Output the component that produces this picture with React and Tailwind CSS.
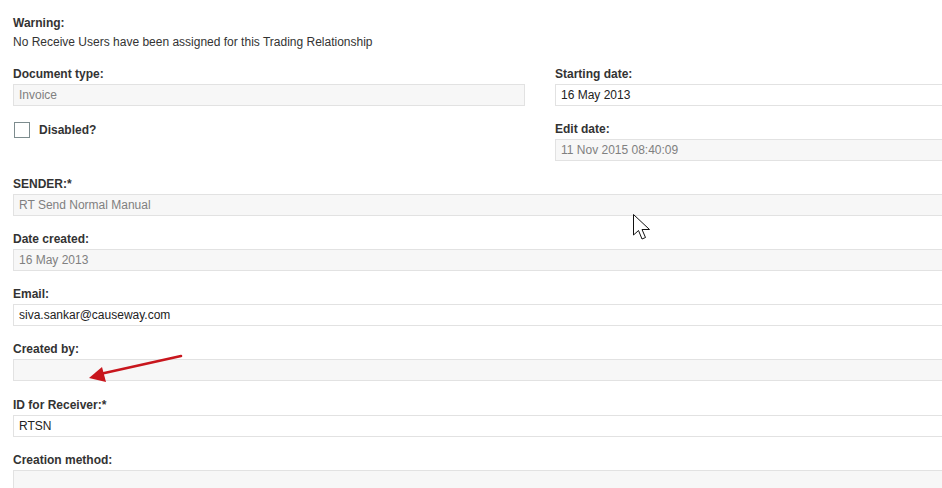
import React from "react";

const font = { fontFamily: '"Liberation Sans", Arial, sans-serif' };

// Label + input block used throughout the form
const Field = ({ label, value, disabled, extra }) => (
  <div className={extra ? "mb-[15px]" : "mb-[14px]"}>
    <div className="h-[17px] leading-[18px] mb-[2px] text-[12px] font-bold text-[#333]">{label}</div>
    <div
      className={
        "h-[22px] border border-[#e2e2e2] px-[5px] text-[12px] leading-[20px] " +
        (disabled ? "bg-[#f7f7f7] text-[#808080]" : "bg-white text-[#222]")
      }
    >
      {value}
    </div>
  </div>
);

export default function App() {
  return (
    <div className="relative w-full h-[488px] overflow-hidden bg-white" style={font}>
      <div className="w-[1100px] pl-[13px] pt-[14px]">
        {/* warning */}
        <div className="text-[12px] leading-[19px] text-[#333] mb-[13px]">
          <div className="font-bold">Warning:</div>
          <div>No Receive Users have been assigned for this Trading Relationship</div>
        </div>

        {/* two columns */}
        <div className="grid grid-cols-[512px_1fr] gap-x-[30px]">
          <div>
            <Field label="Document type:" value="Invoice" disabled />
            <div className="flex items-center mt-[3px]">
              <span className="w-[16px] h-[16px] border border-[#7d8c8e] bg-white ml-[1px]" />
              <span className="ml-[9px] text-[12px] font-bold text-[#333] pt-[1px]">Disabled?</span>
            </div>
          </div>
          <div>
            <Field label="Starting date:" value="16 May 2013" />
            <Field label="Edit date:" value="11 Nov 2015 08:40:09" disabled />
          </div>
        </div>

        {/* full width rows */}
        <Field label="SENDER:*" value="RT Send Normal Manual" disabled />
        <Field label="Date created:" value="16 May 2013" disabled />
        <Field label="Email:" value="siva.sankar@causeway.com" />
        <Field label="Created by:" value="" disabled extra />
        <Field label="ID for Receiver:*" value="RTSN" />
        <Field label="Creation method:" value="" disabled />
      </div>

      {/* red annotation arrow */}
      <svg className="absolute left-0 top-0 pointer-events-none" width="942" height="488">
        <line x1="181" y1="356" x2="100" y2="374" stroke="#c8161d" strokeWidth="2.6" strokeLinecap="round" />
        <polygon points="89,378 102,367 106,382" fill="#c8161d" />
      </svg>

      {/* mouse pointer */}
      <svg className="absolute left-[633px] top-[214px] pointer-events-none" width="20" height="28" viewBox="0 0 20 28">
        <path
          d="M0.5 0.5 L0.5 21 L5.5 16.5 L9 25 L12.5 23.5 L9 15.5 L16.5 15.5 Z"
          fill="#fff"
          stroke="#111"
          strokeWidth="1"
          strokeLinejoin="miter"
        />
      </svg>
    </div>
  );
}
